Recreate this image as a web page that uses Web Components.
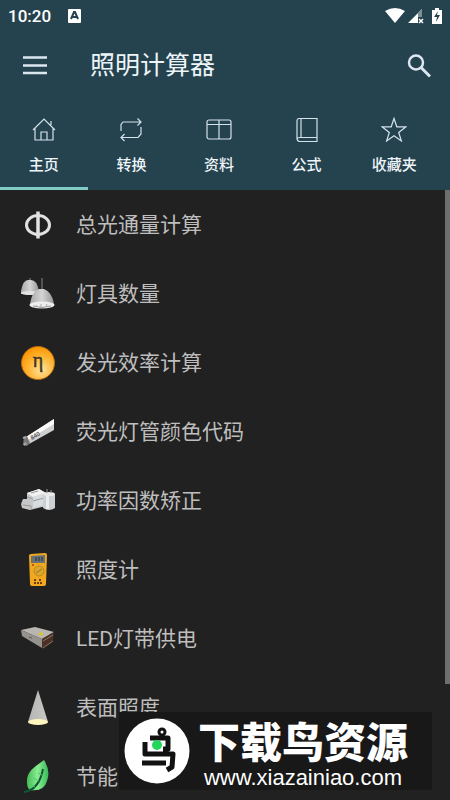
<!DOCTYPE html>
<html lang="zh-CN">
<head>
<meta charset="utf-8">
<meta name="viewport" content="width=device-width, initial-scale=1">
<title>照明计算器</title>
<style>
  body {
    margin: 0;
    background: #212121;
    color: #bebebe;
    font-family: Roboto, "Noto Sans CJK SC", sans-serif;
  }
  svg {
    display: block;
  }
</style>
</head>
<body>
<lighting-app>
  <status-bar slot="header"></status-bar>
  <app-toolbar slot="header">照明计算器</app-toolbar>
  <tab-strip slot="header">
    <tab-item active>
      <svg slot="icon" width="26" height="26" viewBox="0 0 26 26"><path d="M2 14 13 3l11 11M4 12.500V24h18V12.500M10 24v-8h6v8M20 9V5"/></svg>主页
    </tab-item>
    <tab-item>
      <svg slot="icon" width="26" height="26" viewBox="0 0 26 26"><path d="M3 15V8.500L5 6h18M19.500 2.500 23 6l-3.500 3.500M23 11v7l-3 3.500H3M6.500 18 3 21.500 6.500 25"/></svg>转换
    </tab-item>
    <tab-item>
      <svg slot="icon" width="26" height="26" viewBox="0 0 26 26"><rect x="1" y="4" width="24" height="19" rx="2"/><path d="M1 8.500h24M13 4v19"/></svg>资料
    </tab-item>
    <tab-item>
      <svg slot="icon" width="26" height="26" viewBox="0 0 26 26"><path d="M23 2.500H5q-2 0-2 3v17q0 3 3 3h17zM7 2.500v19M23 21.500H6q-3 0-3 2"/></svg>公式
    </tab-item>
    <tab-item>
      <svg slot="icon" width="26" height="26" viewBox="0 0 26 26"><path d="m13 2.500 2.800 8.300H25l-7.300 5.700 2.700 8.500-7.400-5.200L5.600 25l2.700-8.500L1 10.800h9.200z"/></svg>收藏夹
    </tab-item>
  </tab-strip>

  <calc-item>
    <svg slot="icon" width="34" height="36" viewBox="0 0 34 36" fill="none" stroke="#e2e2e2"><ellipse cx="17" cy="18" rx="11.500" ry="9.500" stroke-width="3"/><path d="M17 4.500v27" stroke-width="3.500"/></svg>总光通量计算
  </calc-item>
  <calc-item>
    <svg slot="icon" width="34" height="36" viewBox="0 0 34 36">
      <defs><linearGradient id="shade"><stop stop-color="#aaa"/><stop offset=".5" stop-color="#d4d4d4"/><stop offset="1" stop-color="#949494"/></linearGradient></defs>
      <path d="M9 2v4M21 2v12" stroke="#888"/>
      <path d="M0 15Q2 4 7 4h3q6 0 8 11l-1 3H0z" fill="url(#shade)"/>
      <ellipse cx="9" cy="17" rx="9" ry="2" fill="#e2e2e2"/>
      <path d="M9 28Q11 15 18 13h5q8 3 10 15z" fill="url(#shade)"/>
      <ellipse cx="21" cy="29" rx="12.500" ry="3.500" fill="#ededed"/>
      <path d="M12 30q9 3 18 0" fill="none" stroke="#999"/><path d="m15 29 1 2M20 28v3M26 28l-1 3" stroke="#aaa"/>
    </svg>灯具数量
  </calc-item>
  <calc-item>
    <svg slot="icon" width="34" height="36" viewBox="0 0 34 36">
      <defs><radialGradient id="sun" cx=".6" cy=".7" r=".7"><stop stop-color="#ffe39c"/><stop offset=".55" stop-color="#ffb637"/><stop offset="1" stop-color="#fb9500"/></radialGradient></defs>
      <circle cx="17" cy="18" r="16.500" fill="url(#sun)" stroke="#b76c12"/>
      <text x="17" y="22" text-anchor="middle" font-family="Liberation Serif, serif" font-size="20" fill="#3f3724" stroke="#3f3724" stroke-width=".5">η</text>
    </svg>发光效率计算
  </calc-item>
  <calc-item>
    <svg slot="icon" width="34" height="36" viewBox="0 0 34 36">
      <path d="M5 23 33 5v11L8 30z" fill="#cfcfcf"/><path d="M5 23 33 5v5L7 26z" fill="#fafafa"/>
      <path d="m3 23 3-1 3 7-3 3-4-1z" fill="#777"/><path d="m2 24 3-1M3 31l2-2" stroke="#aaa" stroke-width="2"/>
      <text x="11" y="26" transform="rotate(-31 11 26)" font-family="Liberation Sans, sans-serif" font-size="6" font-weight="bold" fill="#555">840</text>
    </svg>荧光灯管颜色代码
  </calc-item>
  <calc-item>
    <svg slot="icon" width="34" height="36" viewBox="0 0 34 36">
      <path d="m0 21 2-5h4v-6l12-4 7 4v13L9 27l-8-2z" fill="#c5c7c9"/>
      <path d="m6 10 12-4 7 4-13 4z" fill="#f1f1f1"/><path d="m12 14 13-4v12l-13 3z" fill="#d9dcde"/>
      <path d="m10 10 7-2M2 22l8 1v3M12 18l11-3M6 14l6 2" fill="none" stroke="#999"/>
      <path d="M22 11h12v14q-6 4-12 0z" fill="#cdd0d3"/><path d="M25 12h3v14h-3z" fill="#ececec"/>
      <ellipse cx="28" cy="11" rx="6" ry="2" fill="#eaeaea"/><path d="M26 10V6M30 10V7" stroke="#999"/>
    </svg>功率因数矫正
  </calc-item>
  <calc-item>
    <svg slot="icon" width="34" height="36" viewBox="0 0 34 36">
      <path d="M10 2 24 1q2 0 2 2l-1 29q0 2-2 2H11q-2 0-2-2L8 4q0-2 2-2z" fill="#f1a81f"/>
      <path d="m10 4 14-1v8H10z" fill="#657176"/><path d="M15 5v4M18 5v4M21 5v4" stroke="#273135"/>
      <circle cx="18" cy="19" r="5" fill="#dda52b" stroke="#b58a25"/><path d="m15 21 6-4" stroke="#8d742d"/>
      <circle cx="12" cy="13" r="1" fill="#b83e14"/>
      <path d="M13 28h3M18 28h3M13 31h9" stroke="#713f15" stroke-width="2" stroke-dasharray="2 1"/>
    </svg>照度计
  </calc-item>
  <calc-item>
    <svg slot="icon" width="34" height="36" viewBox="0 0 34 36">
      <path d="m0 9 14-3 19 5-12 7z" fill="#b9b5b0"/><path d="m0 9 21 9v9L1 15z" fill="#96928e"/>
      <path d="m21 18 12-7-1 9-11 8z" fill="#4b3026"/><path d="m22 20 10-6M22 27l10-7" stroke="#8b7263"/>
      <path d="m17 13 3-2 3 2-3 2z" fill="#d3c436"/><path d="m8 16 3 1" stroke="#555"/>
    </svg>LED灯带供电
  </calc-item>
  <calc-item>
    <svg slot="icon" width="34" height="36" viewBox="0 0 34 36">
      <defs><linearGradient id="beam"><stop stop-color="#b5b5b5"/><stop offset="1" stop-color="#c9c8c4"/></linearGradient></defs>
      <path d="M17 0 27 32H7z" fill="url(#beam)"/><ellipse cx="17" cy="32" rx="10" ry="3" fill="#fff6bd"/>
    </svg>表面照度
  </calc-item>
  <calc-item>
    <svg slot="icon" width="34" height="36" viewBox="0 0 34 36">
      <defs><linearGradient id="leaf" x1="0" x2="1"><stop stop-color="#42bb54"/><stop offset=".5" stop-color="#8bed93"/><stop offset="1" stop-color="#37b955"/></linearGradient></defs>
      <path d="M23 1C14 8 5 12 6 24q0 5 3 7 14 2 17-9 4-10-3-21z" fill="url(#leaf)"/>
      <path d="M3 33Q18 31 22 10" fill="none" stroke="#0e5734" stroke-width="2"/><path d="m9 25 5 3M12 19l6 3M17 14l4 2" stroke="#50ca65"/>
    </svg>节能
  </calc-item>

  <site-badge slot="overlay"></site-badge>
</lighting-app>

<script>
class LightingApp extends HTMLElement {
  constructor() {
    super();
    this.attachShadow({ mode: 'open' }).innerHTML = `
      <style>
        :host {
          display: flex;
          flex-direction: column;
          height: 100vh;
          overflow: hidden;
          position: relative;
        }
        header {
          background: #25424f;
          color: #eef5f8;
          flex: none;
        }
        main {
          position: relative;
          flex: 1;
          min-height: 0;
        }
        nav {
          height: 100%;
          overflow-y: auto;
          scrollbar-width: none;
        }
        .thumb {
          position: absolute;
          top: 0;
          right: 0;
          width: 5px;
          height: 81%;
          background: #6e6e6e;
        }
      </style>
      <header><slot name="header"></slot></header>
      <main>
        <nav><slot></slot></nav>
        <div class="thumb"></div>
      </main>
      <slot name="overlay"></slot>`;
  }
}

class StatusBar extends HTMLElement {
  constructor() {
    super();
    this.attachShadow({ mode: 'open' }).innerHTML = `
      <style>
        :host {
          display: flex;
          align-items: center;
          height: 32px;
          padding: 0 8px;
          color: #fff;
        }
        time {
          font-size: 17px;
          font-weight: 500;
          flex: 1;
          display: flex;
          align-items: center;
          gap: 17px;
        }
      </style>
      <time>10:20
        <svg width="13" height="14" viewBox="0 0 13 14"><rect width="13" height="14" rx="1" fill="#fff"/><path d="m3 10 3-7h1l3 7M4 8h5" fill="none" stroke="#25424f" stroke-width="2"/></svg>
      </time>
      <svg width="58" height="18" viewBox="0 0 58 18" fill="#fff">
        <path d="M1 4q10-6 20 0L11 16z"/>
        <path d="M24 16 38 2v8h-4v6z"/><path d="M34 6l4-4v8h-4z" fill="#7c8e96"/><path d="m35 12 4 4m0-4-4 4" stroke="#fff" stroke-width="1.500"/>
        <path d="M48 3h3V1h4v2h3v14H48z"/><path d="m54 4-4 6h3l-1 5 4-7h-3z" fill="#25424f"/>
      </svg>`;
  }
}

class AppToolbar extends HTMLElement {
  constructor() {
    super();
    this.attachShadow({ mode: 'open' }).innerHTML = `
      <style>
        :host {
          display: flex;
          align-items: center;
          height: 68px;
          padding: 0 12px 0 16px;
        }
        h1 {
          flex: 1;
          margin: 0 0 0 36px;
          font-size: 25px;
          line-height: 36px;
          font-weight: 400;
        }
        button {
          display: flex;
          padding: 6px;
          border: 0;
          background: none;
          color: #dbe6ef;
        }
      </style>
      <button aria-label="菜单">
        <svg width="26" height="26" viewBox="0 0 26 26" stroke="currentColor" stroke-width="2.500"><path d="M1 4.500h24M1 12.500h24M1 20h24"/></svg>
      </button>
      <h1><slot></slot></h1>
      <button aria-label="搜索">
        <svg width="26" height="26" viewBox="0 0 26 26" fill="none" stroke="currentColor" stroke-width="2.500"><circle cx="10" cy="9.500" r="7"/><path d="m15 14.500 9 9" stroke-width="3"/></svg>
      </button>`;
  }
}

class TabStrip extends HTMLElement {
  constructor() {
    super();
    this.attachShadow({ mode: 'open' }).innerHTML = `
      <style>
        :host {
          display: grid;
          grid-template-columns: repeat(5, 1fr);
          height: 90px;
          padding-right: 12px;
        }
      </style>
      <slot></slot>`;
  }
}

class TabItem extends HTMLElement {
  constructor() {
    super();
    this.attachShadow({ mode: 'open' }).innerHTML = `
      <style>
        :host {
          display: flex;
        }
        button {
          flex: 1;
          display: flex;
          flex-direction: column;
          align-items: center;
          gap: 12px;
          padding: 16px 0 0;
          border: 0;
          border-bottom: 3px solid transparent;
          background: none;
          color: inherit;
          font: 500 15px/22px Roboto, "Noto Sans CJK SC", sans-serif;
        }
        :host([active]) button {
          border-color: #80cbc4;
        }
        ::slotted(svg) {
          fill: none;
          stroke: #d5e2ea;
          stroke-width: 1.2;
        }
      </style>
      <button><slot name="icon"></slot><span><slot></slot></span></button>`;
  }
}

class CalcItem extends HTMLElement {
  constructor() {
    super();
    this.attachShadow({ mode: 'open' }).innerHTML = `
      <style>
        :host {
          display: block;
        }
        a {
          display: flex;
          align-items: center;
          gap: 21px;
          height: 69px;
          padding: 0 21px;
          color: inherit;
          text-decoration: none;
          font-size: 21px;
          line-height: 30px;
        }
      </style>
      <a href="#"><slot name="icon"></slot><span><slot></slot></span></a>`;
  }
}

class SiteBadge extends HTMLElement {
  constructor() {
    super();
    this.attachShadow({ mode: 'open' }).innerHTML = `
      <style>
        :host {
          position: absolute;
          right: 18px;
          bottom: 10px;
          display: flex;
          align-items: center;
          gap: 8px;
          box-sizing: border-box;
          height: 78px;
          padding: 0 24px 0 5px;
          background: #181818;
          color: #fff;
        }
        div {
          display: flex;
          flex-direction: column;
          align-items: center;
          gap: 3px;
          padding-top: 4px;
        }
        strong {
          font: 900 42px/46px "Noto Sans CJK SC", sans-serif;
        }
        span {
          font: 22px/24px "Liberation Sans", sans-serif;
        }
      </style>
      <svg width="66" height="66" viewBox="0 0 66 66" fill="none" stroke="#111" stroke-width="5">
        <circle cx="33" cy="33" r="32.500" fill="#fff" stroke="none"/>
        <circle cx="38" cy="14" r="3" stroke-width="3"/>
        <path d="M26 20h18v11h-5M21 24v12h28l-1 13-5 3M18 45h24" stroke-linejoin="round"/>
        <circle cx="33" cy="27" r="5" fill="#22d65b" stroke="none"/>
      </svg>
      <div><strong>下载鸟资源</strong><span>www.xiazainiao.com</span></div>`;
  }
}

customElements.define('lighting-app', LightingApp);
customElements.define('status-bar', StatusBar);
customElements.define('app-toolbar', AppToolbar);
customElements.define('tab-strip', TabStrip);
customElements.define('tab-item', TabItem);
customElements.define('calc-item', CalcItem);
customElements.define('site-badge', SiteBadge);
</script>
</body>
</html>
